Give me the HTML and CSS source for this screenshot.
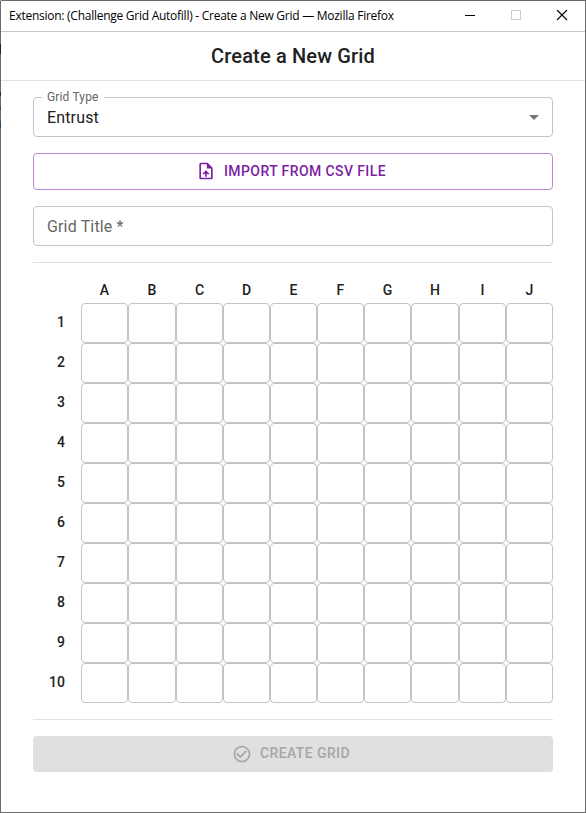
FILE: index.html
```html
<!DOCTYPE html>
<html lang="en">
<head>
<meta charset="utf-8">
<title>Create a New Grid</title>
<link rel="stylesheet" href="styles.css">
</head>
<body>
<div class="window">
  <div class="titlebar">
    <span class="titlebar-text">Extension: (Challenge Grid Autofill) - Create a New Grid — Mozilla Firefox</span>
    <div class="controls">
      <svg width="12" height="12" viewBox="0 0 12 12"><path d="M1 6.5h10" stroke="#000"/></svg>
      <svg width="12" height="12" viewBox="0 0 12 12"><rect x="1.5" y="1.5" width="9" height="9" fill="none" stroke="#ccc"/></svg>
      <svg width="12" height="12" viewBox="0 0 12 12"><path d="M1 1l10 10M11 1L1 11" stroke="#000" stroke-width="1.1"/></svg>
    </div>
  </div>
  <header class="header"><h1>Create a New Grid</h1></header>
  <main class="content">
    <div class="field">
      <span class="label">Grid Type</span>
      <span class="value">Entrust</span>
      <svg class="caret" width="24" height="24" viewBox="0 0 24 24"><path d="M7 10l5 5 5-5z"/></svg>
    </div>
    <button class="button import">
      <svg width="20" height="20" viewBox="0 0 24 24"><path d="M14 2H6c-1.1 0-1.99.9-1.99 2L4 20c0 1.1.89 2 1.99 2H18c1.1 0 2-.9 2-2V8l-6-6zm4 18H6V4h7v5h5v11zM8 15.01l1.41 1.41L11 14.84V19h2v-4.16l1.59 1.59L16 15.01 12.01 11 8 15.01z"/></svg>
      <span>IMPORT FROM CSV FILE</span>
    </button>
    <div class="field"><span class="placeholder">Grid Title *</span></div>
    <hr>
    <div class="grid" id="grid"></div>
    <hr>
    <button class="button create" disabled>
      <svg width="20" height="20" viewBox="0 0 24 24"><path d="M16.59 7.58L10 14.17l-3.59-3.58L5 12l5 5 8-8zM12 2C6.48 2 2 6.48 2 12s4.48 10 10 10 10-4.48 10-10S17.52 2 12 2zm0 18c-4.42 0-8-3.58-8-8s3.58-8 8-8 8 3.58 8 8-3.58 8-8 8z"/></svg>
      <span>CREATE GRID</span>
    </button>
  </main>
</div>
<script src="grid.js"></script>
</body>
</html>
```
FILE: styles.css
```css
* { box-sizing: border-box; }
body {
  margin: 0;
  font-family: Roboto, "Liberation Sans", sans-serif;
  color: #212121;
  background: #fff;
}
.window {
  width: 586px;
  height: 813px;
  border: 1px solid #6b6b6b;
  border-left-color: transparent;
  background: linear-gradient(#6b6b6b 44px, #222 44px 54px, #6b6b6b 54px 92px, #2a2a2a 92px 96px, #6b6b6b 96px 107px, #34465a 107px 110px, #6b6b6b 110px 121px, #2f4a60 121px 128px, #6b6b6b 128px) border-box left top / 1px 813px no-repeat;
  overflow: hidden;
}
.titlebar {
  height: 31px;
  display: flex;
  align-items: center;
  justify-content: space-between;
  padding: 0 17px 1px 8px;
  border-bottom: 1px solid #c8c8c8;
  color: #000;
}
.titlebar-text {
  font: 12px/16px "Open Sans", "Noto Sans", sans-serif;
  letter-spacing: -0.26px;
  white-space: nowrap;
}
.controls { display: flex; gap: 33px 33px; padding-bottom: 1px; }
.controls svg { display: block; }
.controls svg:first-child { margin-right: 1px; }
.controls svg:nth-child(2) { margin-right: 1px; }
.header {
  height: 49px;
  border-bottom: 1px solid #e0e0e0;
  display: flex;
  align-items: center;
  justify-content: center;
}
h1 {
  margin: 0;
  font-size: 20px;
  line-height: 32px;
  font-weight: 500;
  letter-spacing: 0.15px;
}
.content {
  padding: 16px 32px 0;
  display: flex;
  flex-direction: column;
}
.field {
  position: relative;
  height: 40px;
  border: 1px solid #c4c4c4;
  border-radius: 4px;
  padding: 0 6px 0 13px;
  display: flex;
  align-items: center;
  justify-content: space-between;
  font-size: 16px;
  letter-spacing: 0.15px;
}
.label {
  position: absolute;
  left: 8px;
  top: -8px;
  padding: 0 5px;
  background: #fff;
  font-size: 12px;
  line-height: 14px;
  color: #666;
}
.placeholder { color: #666; }
.caret { fill: #757575; }
.button {
  height: 37px;
  border-radius: 4px;
  display: flex;
  align-items: center;
  justify-content: center;
  gap: 8px;
  padding: 0 4px 0 0;
  font: 500 14px/24px Roboto, "Liberation Sans", sans-serif;
  letter-spacing: 0.4px;
}
.button svg { fill: currentColor; }
.button span { padding-bottom: 2px; }
.import {
  margin: 16px 0;
  padding-bottom: 1px;
  background: #fff;
  border: 1px solid #bc88d0;
  color: #7b1fa2;
}
.import span { padding-bottom: 0; }
.create {
  height: 36px;
  border: 0;
  background: #e0e0e0;
  color: #a6a6a6;
}
hr {
  width: 100%;
  height: 1px;
  margin: 16px 0;
  border: 0;
  background: #e0e0e0;
}
.grid {
  display: grid;
  grid-template-columns: 48px 47px 48px repeat(5, 47px) 48px 47px 47px;
  grid-template-rows: 24px repeat(10, 40px);
  font-size: 14px;
  font-weight: 500;
  letter-spacing: 0.1px;
}
.column, .row { display: flex; align-items: center; }
.column { justify-content: center; padding-bottom: 2px; }
.row { justify-content: flex-end; padding: 0 16px 2px 0; }
.cell { border: 1px solid #c4c4c4; border-radius: 4px; }
```
FILE: grid.js
```js
const grid = document.getElementById("grid");

function add(className, text) {
  const item = document.createElement("div");
  item.className = className;
  item.textContent = text;
  grid.append(item);
}

add("corner", "");
for (const letter of "ABCDEFGHIJ") add("column", letter);
for (let row = 1; row <= 10; row++) {
  add("row", row);
  for (let column = 0; column < 10; column++) add("cell", "");
}
```
